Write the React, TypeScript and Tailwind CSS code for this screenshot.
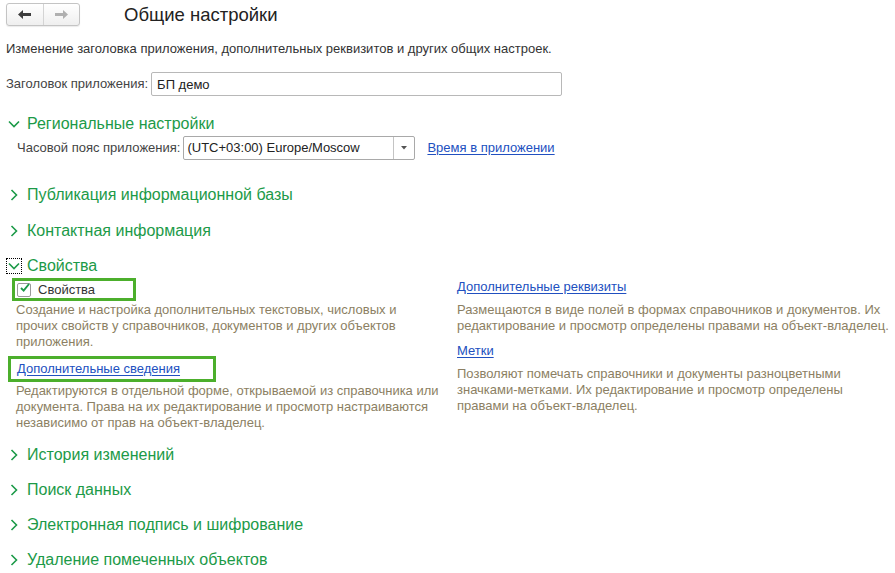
import { useState } from "react";

const GREEN = "text-[#1c9a48]";

const Chevron = ({ open }: { open: boolean }) =>
  open ? (
    <svg width="12" height="8" viewBox="0 0 12 8" className="text-[#1c9a48]">
      <path d="M1 1.5 L6 6.5 L11 1.5" fill="none" stroke="currentColor" strokeWidth="1.6" />
    </svg>
  ) : (
    <svg width="8" height="12" viewBox="0 0 8 12" className="text-[#1c9a48]">
      <path d="M1.5 1 L6.5 6 L1.5 11" fill="none" stroke="currentColor" strokeWidth="1.6" />
    </svg>
  );

interface GroupProps {
  title: string;
  open?: boolean;
  focused?: boolean;
  className?: string;
}

const GroupHeader = ({ title, open = false, focused = false, className = "" }: GroupProps) => (
  <div className={`flex items-center h-[22px] ${className}`}>
    <div
      className={`w-[16px] h-[16px] ml-[6px] flex items-center justify-center ${
        focused ? "border border-dotted border-black" : ""
      }`}
    >
      <Chevron open={open} />
    </div>
    <span className={`ml-[5px] text-[16px] ${GREEN}`}>{title}</span>
  </div>
);

const Link = ({ children }: { children: React.ReactNode }) => (
  <a href="#" className="text-[#2150c0] underline underline-offset-2 leading-[16px]">
    {children}
  </a>
);

const Hint = ({ lines, className = "" }: { lines: string[]; className?: string }) => (
  <div className={`text-[#8c7f63] leading-[16px] whitespace-nowrap ${className}`}>
    {lines.map((l) => (
      <div key={l}>{l}</div>
    ))}
  </div>
);

const NavArrow = ({ dir, color }: { dir: "left" | "right"; color: string }) => (
  <svg width="13" height="9" viewBox="0 0 13 9" style={{ transform: dir === "right" ? "scaleX(-1)" : undefined }}>
    <path d="M0 4.5 L5 0 L5 3 L13 3 L13 6 L5 6 L5 9 Z" fill={color} />
  </svg>
);

export default function App() {
  const [props, setProps] = useState(true);
  const [title, setTitle] = useState("БП демо");

  return (
    <div
      className="w-[895px] h-[573px] bg-white overflow-hidden text-[13px] leading-[16px] text-[#3a3a3a]"
      style={{ fontFamily: '"Liberation Sans", Arial, sans-serif' }}
    >
      {/* header */}
      <div className="flex items-center h-[29px] pl-[6px]">
        <div className="flex h-[23px] w-[74px] border border-[#c4c4c4] rounded-[3px] bg-gradient-to-b from-white to-[#efefef] shadow-[0_1px_1px_rgba(0,0,0,0.08)]">
          <button className="flex-1 flex items-center justify-center border-r border-[#d4d4d4]">
            <NavArrow dir="left" color="#3d3d3d" />
          </button>
          <button className="flex-1 flex items-center justify-center">
            <NavArrow dir="right" color="#b0b0b0" />
          </button>
        </div>
        <h1 className="ml-[44px] text-[18.5px] leading-[24px] text-[#222]">Общие настройки</h1>
      </div>

      <p className="mt-[12px] pl-[6px] text-[#333]">
        Изменение заголовка приложения, дополнительных реквизитов и других общих настроек.
      </p>

      <div className="flex items-center mt-[15px] pl-[6px] h-[24px]">
        <span className="text-[#444]">Заголовок приложения:</span>
        <input
          value={title}
          onChange={(e) => setTitle(e.target.value)}
          className="ml-[3px] w-[411px] h-[24px] border border-[#b8b8b8] rounded-[2px] px-[5px] text-[13px] text-[#222] outline-none"
        />
      </div>

      <GroupHeader title="Региональные настройки" open className="mt-[17px]" />
      <div className="flex items-center mt-[1px] pl-[17px] h-[24px]">
        <span className="text-[#444]">Часовой пояс приложения:</span>
        <div className="ml-[3px] flex w-[232px] h-[24px] border border-[#a9a9a9] rounded-[2px]">
          <span className="flex-1 flex items-center pl-[3px] text-[#222]">(UTC+03:00) Europe/Moscow</span>
          <span className="w-[21px] flex items-center justify-center border-l border-[#c4c4c4]">
            <svg width="6" height="4" viewBox="0 0 6 4">
              <path d="M0 0 H6 L3 3.5 Z" fill="#555" />
            </svg>
          </span>
        </div>
        <span className="ml-[12px]">
          <Link>Время в приложении</Link>
        </span>
      </div>

      <GroupHeader title="Публикация информационной базы" className="mt-[24px]" />
      <GroupHeader title="Контактная информация" className="mt-[14px]" />
      <GroupHeader title="Свойства" open focused className="mt-[13px]" />

      <div className="flex">
        <div className="w-[449px] shrink-0">
          <label className="ml-[12px] mt-[1px] flex items-center w-[124px] h-[23px] border-[3px] border-[#4caf2c] cursor-pointer">
            <span
              onClick={() => setProps(!props)}
              className="ml-[2px] w-[14px] h-[14px] border border-[#9a9a9a] rounded-[2px] bg-white flex items-center justify-center"
            >
              {props && (
                <svg width="15" height="14" viewBox="0 0 15 14" className="-mt-[4px] ml-[2px]">
                  <path d="M1.5 7 L5.5 11 L13.5 1" fill="none" stroke="#1c9a48" strokeWidth="2.8" />
                </svg>
              )}
            </span>
            <span className="ml-[7px] text-[#333]">Свойства</span>
          </label>
          <Hint
            className="pl-[16px] mt-[1px]"
            lines={[
              "Создание и настройка дополнительных текстовых, числовых и",
              "прочих свойств у справочников, документов и других объектов",
              "приложения.",
            ]}
          />
          <div className="ml-[8px] mt-[6px] w-[208px] h-[26px] border-[3px] border-[#4caf2c] flex items-center pl-[6px]">
            <Link>Дополнительные сведения</Link>
          </div>
          <Hint
            className="pl-[16px] mt-[1px]"
            lines={[
              "Редактируются в отдельной форме, открываемой из справочника или",
              "документа. Права на их редактирование и просмотр настраиваются",
              "независимо от прав на объект-владелец.",
            ]}
          />
        </div>

        <div className="pl-[8px] pt-[2px]">
          <Link>Дополнительные реквизиты</Link>
          <Hint
            className="mt-[7px]"
            lines={[
              "Размещаются в виде полей в формах справочников и документов. Их",
              "редактирование и просмотр определены правами на объект-владелец.",
            ]}
          />
          <div className="mt-[9px]">
            <Link>Метки</Link>
          </div>
          <Hint
            className="mt-[7px]"
            lines={[
              "Позволяют помечать справочники и документы разноцветными",
              "значками-метками. Их редактирование и просмотр определены",
              "правами на объект-владелец.",
            ]}
          />
        </div>
      </div>

      <GroupHeader title="История изменений" className="mt-[13px]" />
      <GroupHeader title="Поиск данных" className="mt-[13px]" />
      <GroupHeader title="Электронная подпись и шифрование" className="mt-[13px]" />
      <GroupHeader title="Удаление помеченных объектов" className="mt-[13px]" />
    </div>
  );
}
